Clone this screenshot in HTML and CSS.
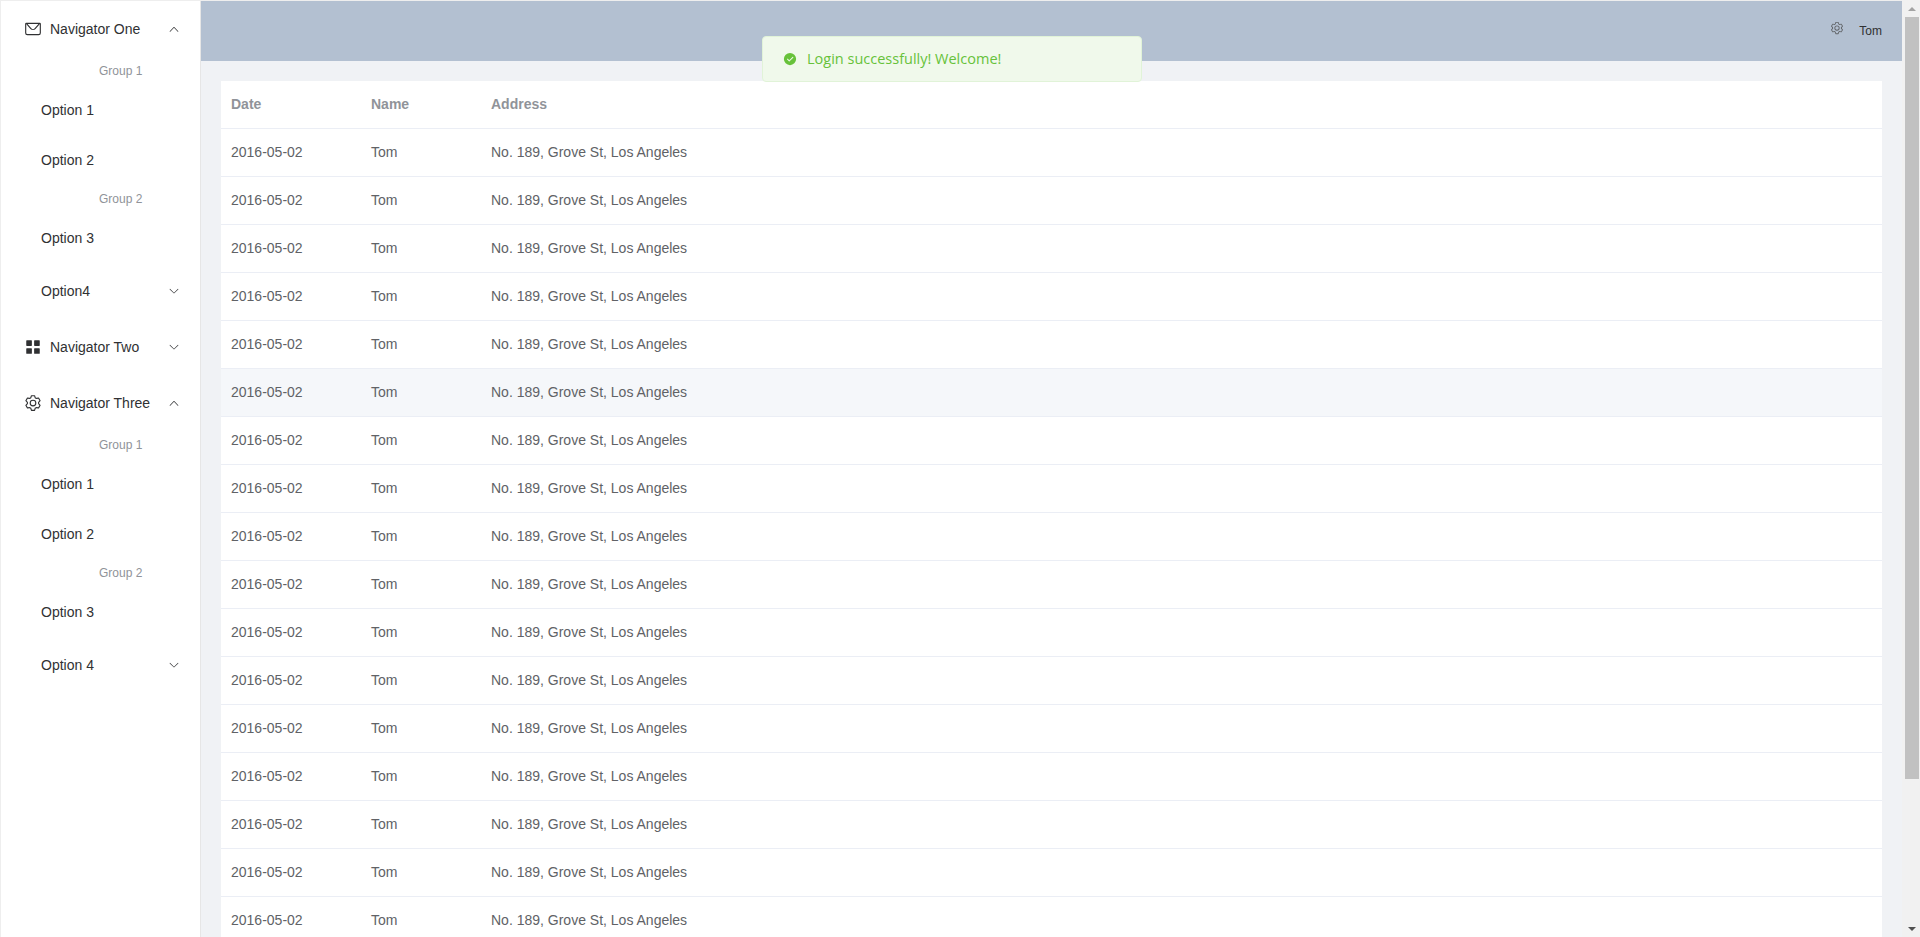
FILE: index.html

```html
<!DOCTYPE html>
<html lang="en">
<head>
    <meta charset="UTF-8">
    <title>Admin</title>
    <link rel="stylesheet" href="styles.css">
</head>
<body>
<svg class="Sprites" xmlns="http://www.w3.org/2000/svg">
    <symbol id="i-message" viewBox="0 0 1024 1024">
        <path d="M128 224v512a64 64 0 0 0 64 64h640a64 64 0 0 0 64-64V224H128zm0-64h768a64 64 0 0 1 64 64v512a128 128 0 0 1-128 128H192A128 128 0 0 1 64 736V224a64 64 0 0 1 64-64z"/>
        <path d="M904 224 656.512 506.88a192 192 0 0 1-289.024 0L120 224h784zm-698.944 0 210.56 240.704a128 128 0 0 0 192.704 0L818.944 224H205.056z"/>
    </symbol>
    <symbol id="i-menu" viewBox="0 0 1024 1024">
        <path d="M160 448a32 32 0 0 1-32-32V160.064a32 32 0 0 1 32-32h256a32 32 0 0 1 32 32V416a32 32 0 0 1-32 32H160zm448 0a32 32 0 0 1-32-32V160.064a32 32 0 0 1 32-32h255.936a32 32 0 0 1 32 32V416a32 32 0 0 1-32 32H608zM160 896a32 32 0 0 1-32-32V608a32 32 0 0 1 32-32h256a32 32 0 0 1 32 32v256a32 32 0 0 1-32 32H160zm448 0a32 32 0 0 1-32-32V608a32 32 0 0 1 32-32h255.936a32 32 0 0 1 32 32v256a32 32 0 0 1-32 32H608z"/>
    </symbol>
    <symbol id="i-setting" viewBox="0 0 1024 1024">
        <path d="M600.704 64a32 32 0 0 1 30.464 22.208l35.2 109.376c14.784 7.232 28.928 15.36 42.432 24.512l112.384-24.192a32 32 0 0 1 34.432 15.36L944.32 364.8a32 32 0 0 1-4.032 37.504l-77.12 85.12a357.12 357.12 0 0 1 0 49.024l77.12 85.248a32 32 0 0 1 4.032 37.504l-88.704 153.6a32 32 0 0 1-34.432 15.296L708.8 803.904c-13.44 9.088-27.648 17.28-42.368 24.512l-35.264 109.376A32 32 0 0 1 600.704 960H423.296a32 32 0 0 1-30.464-22.208L357.696 828.48a351.616 351.616 0 0 1-42.56-24.64l-112.32 24.256a32 32 0 0 1-34.432-15.36L79.68 659.2a32 32 0 0 1 4.032-37.504l77.12-85.248a357.12 357.12 0 0 1 0-48.896l-77.12-85.248A32 32 0 0 1 79.68 364.8l88.704-153.6a32 32 0 0 1 34.432-15.296l112.32 24.256c13.568-9.152 27.776-17.408 42.56-24.64l35.2-109.312A32 32 0 0 1 423.232 64H600.64zm-23.424 64H446.72l-36.352 113.088-24.512 11.968a294.113 294.113 0 0 0-34.816 20.096l-22.656 15.36-116.224-25.088-65.28 113.152 79.68 88.192-1.92 27.136a293.12 293.12 0 0 0 0 40.192l1.92 27.136-79.808 88.192 65.344 113.152 116.224-25.024 22.656 15.296a294.113 294.113 0 0 0 34.816 20.096l24.512 11.968L446.72 896h130.688l36.48-113.152 24.448-11.904a288.282 288.282 0 0 0 34.752-20.096l22.592-15.296 116.288 25.024 65.28-113.152-79.744-88.192 1.92-27.136a293.12 293.12 0 0 0 0-40.256l-1.92-27.136 79.808-88.128-65.344-113.152-116.288 24.96-22.592-15.232a287.616 287.616 0 0 0-34.752-20.096l-24.448-11.904L577.344 128zM512 320a192 192 0 1 1 0 384 192 192 0 0 1 0-384zm0 64a128 128 0 1 0 0 256 128 128 0 0 0 0-256z"/>
    </symbol>
    <symbol id="i-up" viewBox="0 0 1024 1024">
        <path d="m488.832 344.32-339.84 356.672a32 32 0 0 0 0 44.16l.384.384a29.44 29.44 0 0 0 42.688 0l320-335.872 319.872 335.872a29.44 29.44 0 0 0 42.688 0l.384-.384a32 32 0 0 0 0-44.16L535.168 344.32a32 32 0 0 0-46.336 0z"/>
    </symbol>
    <symbol id="i-down" viewBox="0 0 1024 1024">
        <path d="M831.872 340.864 512 652.672 192.128 340.864a30.592 30.592 0 0 0-42.752 0 29.12 29.12 0 0 0 0 41.6L489.664 714.24a32 32 0 0 0 44.672 0l340.288-331.712a29.12 29.12 0 0 0 0-41.6 30.592 30.592 0 0 0-42.752 0z"/>
    </symbol>
    <symbol id="i-success" viewBox="0 0 1024 1024">
        <path d="M512 64a448 448 0 1 1 0 896 448 448 0 0 1 0-896zm-55.808 536.384-99.52-99.584a38.4 38.4 0 1 0-54.336 54.336l126.72 126.72a38.272 38.272 0 0 0 54.336 0l262.4-262.464a38.4 38.4 0 1 0-54.272-54.336L456.192 600.384z"/>
    </symbol>
</svg>

<div class="Layout">
    <aside class="Aside">
        <ul class="Menu">
            <li class="Menu-title">
                <svg class="Menu-icon"><use href="#i-message"/></svg>
                <span>Navigator One</span>
                <svg class="Menu-arrow"><use href="#i-up"/></svg>
            </li>
            <li class="Menu-group">Group 1</li>
            <li class="Menu-item">Option 1</li>
            <li class="Menu-item">Option 2</li>
            <li class="Menu-group">Group 2</li>
            <li class="Menu-item">Option 3</li>
            <li class="Menu-title Menu-title--sub">
                <span>Option4</span>
                <svg class="Menu-arrow"><use href="#i-down"/></svg>
            </li>
            <li class="Menu-title">
                <svg class="Menu-icon"><use href="#i-menu"/></svg>
                <span>Navigator Two</span>
                <svg class="Menu-arrow"><use href="#i-down"/></svg>
            </li>
            <li class="Menu-title">
                <svg class="Menu-icon"><use href="#i-setting"/></svg>
                <span>Navigator Three</span>
                <svg class="Menu-arrow"><use href="#i-up"/></svg>
            </li>
            <li class="Menu-group">Group 1</li>
            <li class="Menu-item">Option 1</li>
            <li class="Menu-item">Option 2</li>
            <li class="Menu-group">Group 2</li>
            <li class="Menu-item">Option 3</li>
            <li class="Menu-title Menu-title--sub">
                <span>Option 4</span>
                <svg class="Menu-arrow"><use href="#i-down"/></svg>
            </li>
        </ul>
    </aside>

    <div class="Content">
        <header class="Header">
            <svg class="Header-gear"><use href="#i-setting"/></svg>
            <span class="Header-user">Tom</span>
        </header>
        <main class="Main">
            <table class="Table">
                <thead>
                    <tr><th class="Table-date">Date</th><th class="Table-name">Name</th><th>Address</th></tr>
                </thead>
                <tbody>
                    <tr><td>2016-05-02</td><td>Tom</td><td>No. 189, Grove St, Los Angeles</td></tr>
                    <tr><td>2016-05-02</td><td>Tom</td><td>No. 189, Grove St, Los Angeles</td></tr>
                    <tr><td>2016-05-02</td><td>Tom</td><td>No. 189, Grove St, Los Angeles</td></tr>
                    <tr><td>2016-05-02</td><td>Tom</td><td>No. 189, Grove St, Los Angeles</td></tr>
                    <tr><td>2016-05-02</td><td>Tom</td><td>No. 189, Grove St, Los Angeles</td></tr>
                    <tr class="is-hover"><td>2016-05-02</td><td>Tom</td><td>No. 189, Grove St, Los Angeles</td></tr>
                    <tr><td>2016-05-02</td><td>Tom</td><td>No. 189, Grove St, Los Angeles</td></tr>
                    <tr><td>2016-05-02</td><td>Tom</td><td>No. 189, Grove St, Los Angeles</td></tr>
                    <tr><td>2016-05-02</td><td>Tom</td><td>No. 189, Grove St, Los Angeles</td></tr>
                    <tr><td>2016-05-02</td><td>Tom</td><td>No. 189, Grove St, Los Angeles</td></tr>
                    <tr><td>2016-05-02</td><td>Tom</td><td>No. 189, Grove St, Los Angeles</td></tr>
                    <tr><td>2016-05-02</td><td>Tom</td><td>No. 189, Grove St, Los Angeles</td></tr>
                    <tr><td>2016-05-02</td><td>Tom</td><td>No. 189, Grove St, Los Angeles</td></tr>
                    <tr><td>2016-05-02</td><td>Tom</td><td>No. 189, Grove St, Los Angeles</td></tr>
                    <tr><td>2016-05-02</td><td>Tom</td><td>No. 189, Grove St, Los Angeles</td></tr>
                    <tr><td>2016-05-02</td><td>Tom</td><td>No. 189, Grove St, Los Angeles</td></tr>
                    <tr><td>2016-05-02</td><td>Tom</td><td>No. 189, Grove St, Los Angeles</td></tr>
                </tbody>
            </table>
        </main>
    </div>

    <div class="Message">
        <svg class="Message-icon"><use href="#i-success"/></svg>
        <span>Login successfully! Welcome!</span>
    </div>
</div>

<div class="Scrollbar">
    <div class="Scrollbar-btn"><span class="Scrollbar-up"></span></div>
    <div class="Scrollbar-thumb"></div>
    <div class="Scrollbar-btn Scrollbar-btn--end"><span class="Scrollbar-down"></span></div>
</div>
</body>
</html>
```

FILE: styles.css

```css
html, body {
    height: 100%;
}
body {
    margin: 0;
    display: flex;
    overflow: hidden;
    font-family: "Liberation Sans", Arial, sans-serif;
    font-size: 14px;
    color: #303133;
}
svg {
    fill: currentColor;
}
.Sprites {
    display: none;
}

.Layout {
    position: relative;
    flex: 1;
    min-width: 0;
    display: flex;
    box-sizing: border-box;
    padding: 1px 0 0 1px;
    background: #eee;
}

/* sidebar */
.Aside {
    width: 199px;
    flex: none;
    background: #fff;
    border-right: 1px solid #e6e6e6;
}
.Menu {
    list-style: none;
    margin: 0;
    padding: 0;
}
.Menu-title {
    height: 56px;
    display: flex;
    align-items: center;
    padding: 0 20px;
}
.Menu-title--sub {
    padding-left: 40px;
}
.Menu-icon {
    width: 18px;
    height: 18px;
    margin: 0 8px 0 3px;
    flex: none;
}
.Menu-arrow {
    width: 12px;
    height: 12px;
    margin-left: auto;
    flex: none;
}
.Menu-group {
    padding: 7px 0 7px 98px;
    font-size: 12px;
    line-height: 14px;
    color: #909399;
}
.Menu-item {
    height: 50px;
    line-height: 50px;
    padding-left: 40px;
}

/* right side */
.Content {
    flex: 1;
    min-width: 0;
    display: flex;
    flex-direction: column;
}
.Header {
    height: 60px;
    flex: none;
    display: flex;
    align-items: flex-start;
    justify-content: flex-end;
    padding-right: 20px;
    background: #b3c0d1;
    font-size: 12px;
}
.Header-gear {
    width: 14px;
    height: 14px;
    margin: 20px 15px 0 0;
    color: #606266;
}
.Header-user {
    margin-top: 23px;
    line-height: 14px;
}
.Main {
    flex: 1;
    min-height: 0;
    overflow: hidden;
    padding: 20px;
    background: #f0f2f5;
}
.Table {
    width: 100%;
    border-collapse: collapse;
    table-layout: fixed;
    background: #fff;
    color: #606266;
}
.Table th, .Table td {
    height: 46px;
    padding: 0 10px 1px;
    text-align: left;
    border-bottom: 1px solid #ebeef5;
}
.Table th {
    color: #909399;
}
.Table-date {
    width: 120px;
}
.Table-name {
    width: 100px;
}
.Table tr.is-hover td {
    background: #f5f7fa;
}

/* toast */
.Message {
    position: absolute;
    top: 36px;
    left: 762px;
    width: 380px;
    box-sizing: border-box;
    display: flex;
    align-items: center;
    gap: 10px;
    padding: 15px 15px 15px 20px;
    border: 1px solid #e1f3d8;
    border-radius: 4px;
    background: #f0f9eb;
    color: #67c23a;
    font-family: "Open Sans", "Noto Sans", sans-serif;
    font-size: 14.5px;
    line-height: 14px;
}
.Message-icon {
    width: 14px;
    height: 14px;
    flex: none;
}

/* fake scrollbar */
.Scrollbar {
    width: 18px;
    flex: none;
    display: flex;
    flex-direction: column;
    background: #f1f1f1;
}
.Scrollbar-btn {
    height: 17px;
    flex: none;
    display: flex;
    align-items: center;
    justify-content: center;
    padding-left: 2px;
}
.Scrollbar-btn--end {
    margin-top: auto;
}
.Scrollbar-up {
    border: 4px solid transparent;
    border-top: 0;
    border-bottom-color: #a3a3a3;
}
.Scrollbar-down {
    border: 4px solid transparent;
    border-bottom: 0;
    border-top-color: #505050;
}
.Scrollbar-thumb {
    height: 762px;
    width: 14px;
    margin-left: 3px;
    background: #c1c1c1;
}
```
